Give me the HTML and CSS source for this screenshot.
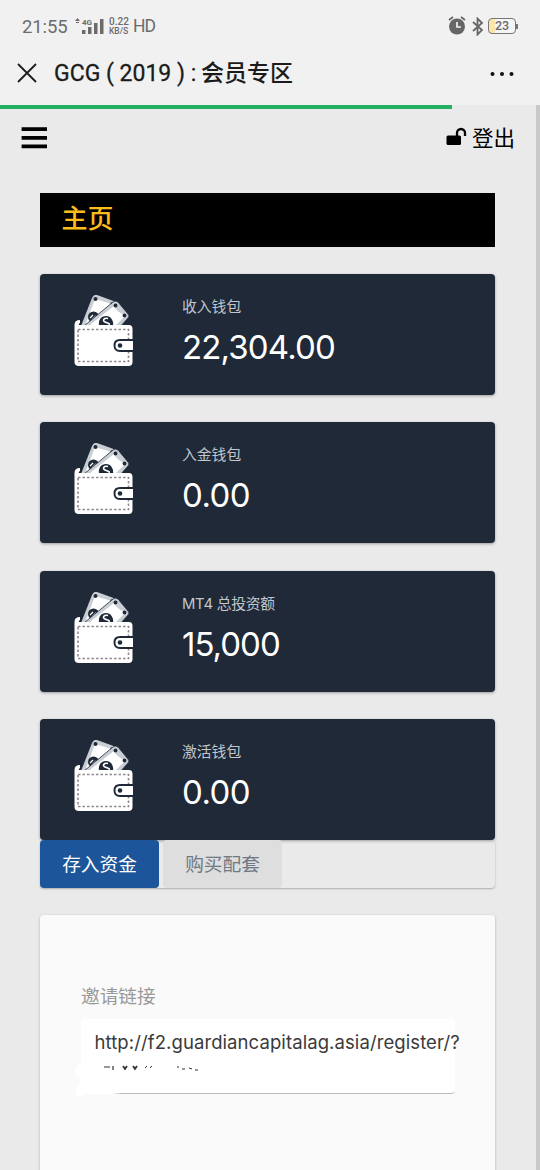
FILE: index.html
```
<!DOCTYPE html>
<html lang="zh-CN">
<head>
<meta charset="utf-8">
<title>GCG ( 2019 ) : 会员专区</title>
<link rel="stylesheet" href="styles.css">
</head>
<body>
<svg class="defs" aria-hidden="true">
  <symbol id="wallet" viewBox="0 0 60 72">
    <path d="M7 31 18 3q2-4 5-3l22 8-9 25H7z" fill="#c9ced5"/>
    <path d="M12 28 21 4l20 6-11 20z" fill="#fff"/>
    <circle cx="21.500" cy="4" r="2" fill="#1f2937"/>
    <circle cx="38" cy="9" r="1.800" fill="#1f2937"/>
    <circle cx="19.500" cy="22" r="5.500" fill="#1f2937"/>
    <path d="m16 23 3-3m-1 5 4-4" stroke="#fff" stroke-width="1.300"/>
    <path d="M10 31 39 7q2-2 5 0l10 12q2 2 0 4l-8 9H10z" fill="#c9ced5" stroke="#1f2937" stroke-width=".8"/>
    <path d="m17 29 23-18q1 4 11 10L41 31H17z" fill="#fff"/>
    <circle cx="41.500" cy="10.500" r="1.900" fill="#1f2937"/>
    <circle cx="50.500" cy="20.500" r="1.900" fill="#1f2937"/>
    <path d="M25 31c-1-6 2-10 7-10s8 5 7 10z" fill="#1f2937"/>
    <path d="M34 23.500c-4-1-6 2-3 3.500s5 1 4 3" fill="none" stroke="#fff" stroke-width="1.600"/>
    <path d="M.5 30q0-5 5.500-5v3q-2 1-1 2h50q3.500 0 3.500 4v33q0 4-4 4H5q-4.500 0-4.500-4z" fill="#fff"/>
    <rect x="4" y="34.500" width="50.500" height="32" fill="none" stroke="#8f8992" stroke-width="1.600" stroke-dasharray="2.500 2"/>
    <path d="M60 45H46q-5.500 0-5.500 5.500T46 56h14z" fill="#fff" stroke="#1f2937" stroke-width="1.900"/>
    <circle cx="46" cy="50.500" r="2.300" fill="#1f2937"/>
    <path d="M59.200 43h.8v15h-.8z" fill="#1f2937"/>
  </symbol>
</svg>
<header class="chrome">
  <div class="status">
    <span class="clock">21:55</span>
    <svg class="signal" width="31" height="18" viewBox="0 0 31 18" fill="#6c6c6c">
      <path d="m0 3 2.500-3L5 3zM1 4h3v1H1zM7 12h3.500v4H7zM13 9h3.500v7H13zM19 5h3.500v11H19zM25 1h3.500v15H25z"/>
      <text class="net" x="7" y="6.500" textLength="10" lengthAdjust="spacingAndGlyphs">4G</text>
    </svg>
    <span class="speed"><span class="rate">0.22</span><span class="unit">KB/S</span></span>
    <span class="hd">HD</span>
    <span class="grow"></span>
    <svg class="alarm" width="18" height="19" viewBox="0 0 18 19"><circle cx="9" cy="10.500" r="8" fill="#666"/><path d="m1 4 4-3m8 0 4 3" stroke="#666" stroke-width="1.800" fill="none"/><path d="M9 6v5h4" stroke="#f1f1f1" stroke-width="1.700" fill="none"/></svg>
    <svg class="bt" width="12" height="19" viewBox="0 0 12 19"><path d="m1 5 9 8-4.500 4.500v-16L10 6l-9 8" fill="none" stroke="#666" stroke-width="1.800"/></svg>
    <span class="battery">23</span>
    <span class="tip"></span>
  </div>
  <div class="titlebar">
    <svg class="close" width="20" height="20" viewBox="0 0 20 20"><path d="m1 1 18 18M19 1 1 19" stroke="#1c1c1c" stroke-width="1.800"/></svg>
    <h1 class="title"><span class="title-latin">GCG ( 2019 ) :</span><span class="title-cjk">会员专区</span></h1>
    <svg class="more" width="24" height="6" viewBox="0 0 24 6" fill="#111"><circle cx="2.500" cy="3" r="2"/><circle cx="12" cy="3" r="2"/><circle cx="21.500" cy="3" r="2"/></svg>
  </div>
</header>
<div class="web">
  <div class="progress"></div>
  <nav class="nav">
    <svg class="menu" width="26" height="22" viewBox="0 0 26 22"><path d="M2.500 2.200h22M2.500 10.800h22M2.500 19.400h22" stroke="#000" stroke-width="3.800" stroke-linecap="square"/></svg>
    <a class="logout">
      <svg class="lock" width="21" height="19" viewBox="0 0 21 19"><rect x=".5" y="8.500" width="14.500" height="9.500" rx="1.500"/><path d="M11 10V6a4 4 0 0 1 8 0v3" fill="none" stroke="#000" stroke-width="2.300"/></svg>
      <span>登出</span>
    </a>
  </nav>
  <main class="page">
    <h2 class="heading">主页</h2>
    <div class="cards">
      <section class="card"><svg class="wallet"><use href="#wallet"/></svg><div><p class="label">收入钱包</p><p class="amount">22,304.00</p></div></section>
      <section class="card"><svg class="wallet"><use href="#wallet"/></svg><div><p class="label">入金钱包</p><p class="amount zero">0.00</p></div></section>
      <section class="card"><svg class="wallet"><use href="#wallet"/></svg><div><p class="label mixed">MT4 总投资额</p><p class="amount thousands">15,000</p></div></section>
      <section class="card"><svg class="wallet"><use href="#wallet"/></svg><div><p class="label">激活钱包</p><p class="amount zero">0.00</p></div></section>
    </div>
    <div class="tabs"><button class="tab active">存入资金</button><button class="tab">购买配套</button></div>
    <section class="invite">
      <p class="invite-label">邀请链接</p>
      <div class="field">
        <span class="url">http://f2.guardiancapitalag.asia/register/?</span>
        <svg class="marks" width="102" height="8" viewBox="0 0 102 8" fill="none" stroke="#333"><path d="M3 3h6m3-1v4" stroke-width="1.200"/><path d="m22 2 2 3 2-3m6 0 2 3 2-3" stroke-width="1.800"/><path d="m44 4 2-2m3 2 2-2M76 3h2m3 2h3m4-1 3 1m3 1h3" stroke-width="1"/></svg>
        <svg class="smudge" width="58" height="42" viewBox="0 0 58 42" fill="#fff"><path d="M8 0C3 3 1 7 0 12q3 5 7 7l-4 7q-3 3-2 8 4 3 8-1h28q12-1 16-3V0z"/></svg>
      </div>
    </section>
  </main>
</div>
</body>
</html>
```
FILE: styles.css
```
* { box-sizing: border-box; }
body { margin: 0; width: 540px; height: 1170px; overflow: hidden; background: #eaeaea; font-family: Inter, "Noto Sans CJK SC", sans-serif; }
p, h1, h2 { margin: 0; font-weight: 400; }
svg { display: block; flex: none; }
.defs { position: absolute; width: 0; height: 0; }
.chrome { height: 105px; background: #f1f1f1; font-family: Roboto, "Noto Sans CJK SC", sans-serif; }
.status { display: flex; align-items: center; height: 52px; padding: 0 22px; color: #6c6c6c; }
.clock { width: 53px; padding-top: 1px; font-size: 18.5px; letter-spacing: -.1px; }
.signal { margin-top: 1px; }
.net { font: 700 8px Roboto, sans-serif; }
.speed { display: flex; flex-direction: column; width: 22px; margin-left: 3px; font-size: 10px; line-height: 10px; font-weight: 500; }
.unit { font-size: 8.5px; line-height: 9px; }
.hd { margin-left: 2px; font-size: 17.5px; letter-spacing: -1px; }
.grow { flex: 1; }
.alarm { margin-top: -1px; }
.bt { margin-left: 6px; }
.battery { width: 28px; height: 16px; margin-left: 4px; border: 1.5px solid #777; border-radius: 4px; background: linear-gradient(90deg, #fae5aa 23%, #f5f5f5 23%); font-size: 12.5px; font-weight: 500; line-height: 14px; text-align: center; }
.tip { width: 2px; height: 5px; background: #777; }
.titlebar { display: flex; align-items: center; height: 43px; padding: 0 26px 0 17px; }
.close { margin-top: -2px; }
.title { display: flex; margin: 1px 0 0 17px; font-size: 23px; line-height: 38px; color: #1b1b1b; white-space: pre; }
.title-latin { width: 147px; -webkit-text-stroke: .3px; }
.title-cjk { font-weight: 500; }
.more { margin-left: auto; }
.web { height: 1065px; border-right: 4px solid #c9c9c9; }
.progress { width: 452px; height: 4px; background: #20b165; }
.nav { display: flex; align-items: center; justify-content: space-between; height: 84px; padding: 0 21px 26px; }
.logout { display: flex; align-items: center; gap: 4.5px; font-size: 21.5px; line-height: 30px; }
.lock { margin-top: -3px; }
.page { padding: 0 41px 0 40px; }
.heading { height: 54px; padding-left: 21.5px; background: #000; color: #fbbd1c; font-size: 26px; line-height: 51px; font-weight: 500; }
.cards { display: flex; flex-direction: column; gap: 27.6px; margin-top: 26.6px; }
.card { display: flex; height: 121px; padding: 21px 0 0 34px; border-radius: 4px; background: #1f2937; box-shadow: 0 1px 3px #0005; }
.wallet { width: 60px; height: 72px; margin-right: 48px; }
.label { height: 24px; color: #c1c7ce; font-size: 14.8px; line-height: 24px; }
.mixed { letter-spacing: -.25px; }
.amount { margin-top: 8px; color: #fff; font-size: 33px; line-height: 40px; letter-spacing: -.85px; white-space: nowrap; }
.zero { letter-spacing: -.6px; }
.thousands { letter-spacing: -1px; }
.tabs { display: flex; gap: 4px; height: 47.5px; border-radius: 4px; box-shadow: 0 1px 2px #0004; }
.tab { width: 119px; padding: 0 0 4px; border: 0; border-radius: 4px; background: #dedede; color: #6e7985; font: 400 18.7px/43px "Noto Sans CJK SC", sans-serif; }
.active { background: #1c5599; color: #fff; }
.invite { height: 260px; margin-top: 27px; padding: 68px 40px 0 41px; border-radius: 4px; background: #fafafa; box-shadow: 0 1px 3px #0004; }
.invite-label { height: 36px; color: #999; font-size: 18.7px; line-height: 27px; }
.field { position: relative; height: 75px; padding: 9px 0 0 13.5px; border-bottom: 1px solid #bbb; border-radius: 4px; background: #fff; }
.url { position: relative; z-index: 1; display: block; color: #3a3a3a; font-size: 18.5px; line-height: 28px; letter-spacing: .09px; white-space: nowrap; }
.marks { position: absolute; left: 20px; top: 45px; z-index: 1; }
.smudge { position: absolute; left: -6px; top: 42px; }
```
